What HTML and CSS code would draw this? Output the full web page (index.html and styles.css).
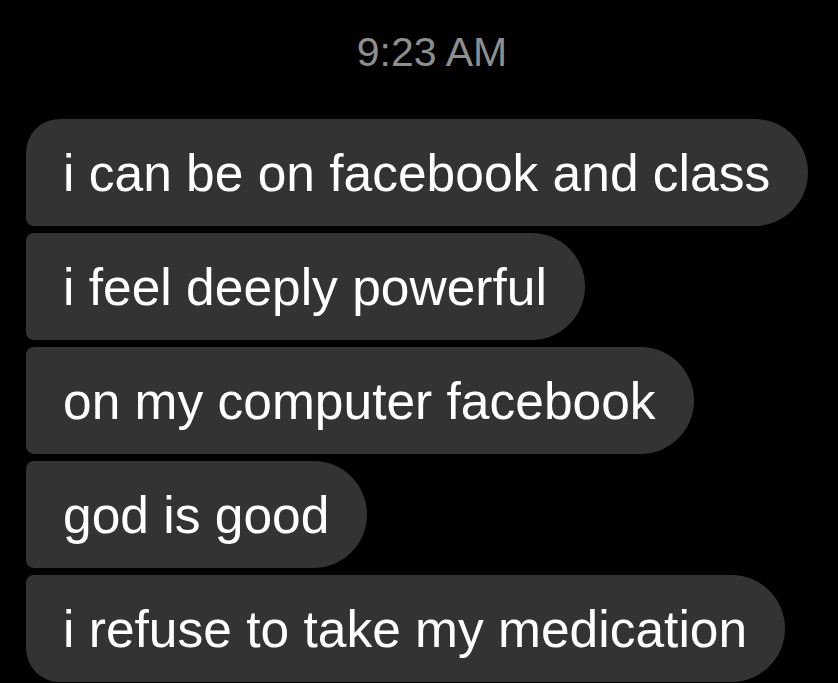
FILE: index.html
```html
<!DOCTYPE html>
<html lang="en">
<head>
  <meta charset="UTF-8" />
  <title>Messages</title>
  <link rel="stylesheet" href="styles.css">
</head>
<body>
  <div class="thread">
    <p class="timestamp">9:23 AM</p>

    <div class="bubbles">
      <div class="bubble first">i can be on facebook and class</div>
      <div class="bubble">i feel deeply powerful</div>
      <div class="bubble">on my computer facebook</div>
      <div class="bubble">god is good</div>
      <div class="bubble last">i refuse to take my medication</div>
    </div>
  </div>
</body>
</html>
```

FILE: styles.css
```css
html,
body {
  margin: 0;
  background: #000;
}
body {
  font-family: 'Liberation Sans', Arial, sans-serif;
  color: #fff;
  overflow: hidden;
}
.thread {
  height: 683px;
}
.timestamp {
  margin: 0;
  padding: 28px 0 0 26px;
  text-align: center;
  font-size: 41px;
  line-height: 48px;
  color: #8e8e8e;
}
.bubbles {
  display: flex;
  flex-direction: column;
  align-items: flex-start;
  gap: 7px;
  margin-top: 43px;
  padding-left: 26px;
}
.bubble {
  background: #333333;
  font-size: 51.5px;
  line-height: 60px;
  padding: 24px 38px 23px 37px;
  border-radius: 8px 54px 54px 8px;
  white-space: nowrap;
}
.bubble.first {
  border-top-left-radius: 34px;
}
.bubble.last {
  border-bottom-left-radius: 34px;
}
```
